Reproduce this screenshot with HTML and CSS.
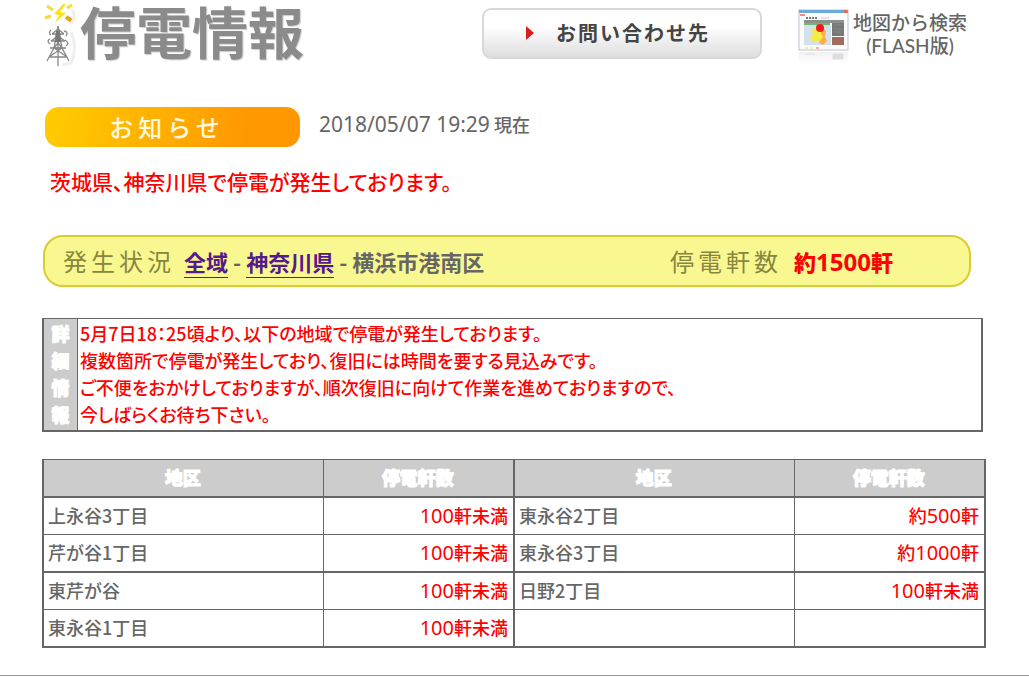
FILE: index.html
```html
<!DOCTYPE html>
<html lang="ja">
<head>
<meta charset="utf-8">
<meta name="viewport" content="width=device-width, initial-scale=1">
<title>停電情報</title>
<link rel="stylesheet" href="styles.css">
</head>
<body>
<header class="header">
  <div class="brand">
    <svg class="brand-icon" viewBox="0 0 34 64" aria-hidden="true">
      <path d="M19 2 10 12l5 1-4 8 11-10-6-1 6-8z" fill="#ffe21c"/>
      <path d="M3 4l6 4M1 16l6-2M28 3l-5 3" stroke="#f6d93c" stroke-width="3"/>
      <path d="M22 15l6 4" stroke="#e9a318" stroke-width="4"/>
      <path d="M28 8q5 6-1 14M27 30q7 15 0 31l-9 2" fill="none" stroke="#efefef" stroke-width="3"/>
      <g fill="none" stroke="#888" stroke-width="1.3">
        <path d="M14 24 10 46 3 59M14 24l4 22 7 13M14 26v38M10 46l13 9M18 46 5 55M5 55h18M9 46h10M11 37h6M11 37l7 9M17 37l-7 9"/>
        <path d="M8 32h12M7 39h14M6 46h16M8 32l6-5 6 5M7 39l7-5 7 5M7 28q-3 3 0 5M20 29q5 1 2 5M6 37q-4 2 0 5M21 38q5 3 1 6"/>
      </g>
      <path d="M12 29h4l1 11h-6z" fill="#777"/>
    </svg>
    <h1 class="brand-title">停電情報</h1>
  </div>
  <button class="contact" type="button">
    <svg class="contact-arrow" viewBox="0 0 8 14" aria-hidden="true"><path d="M0 0l8 7-8 7z" fill="#dc1a22"/></svg>
    <span>お問い合わせ先</span>
  </button>
  <a class="map-link" href="#map">
    <svg class="map-icon" viewBox="0 0 52 56" aria-hidden="true">
      <defs>
        <linearGradient id="fade" x1="0" y1="0" x2="0" y2="1"><stop offset="0" stop-color="#ddd"/><stop offset="1" stop-color="#fff"/></linearGradient>
      </defs>
      <rect x="1" y="1" width="49" height="40" fill="#fbfbfb" stroke="#b9c3dc"/>
      <path d="M1 1h49v3H1z" fill="#69a9dc"/>
      <path d="M46 1h3v3h-3z" fill="#e06a50"/>
      <path d="M2 6h5" stroke="#f08a80" stroke-width="2"/>
      <path d="M8 9h11" stroke="#777" stroke-width="2" stroke-dasharray="2 1"/>
      <path d="M23 9h8" stroke="#ccc"/>
      <path d="M6 11h40v3H6z" fill="#8a908a"/>
      <path d="M6 14h26v2H6z" fill="#69bb72"/>
      <path d="M6 16h27v20H6z" fill="#d4e1ea"/>
      <path d="M34 14h12v13H34z" fill="#777"/>
      <path d="M36 16h8M36 20h8M36 23h8" stroke="#888"/>
      <path d="M34 28h12v8H34z" fill="#a06b5b"/>
      <path d="M23 17l5 5-1 6 2 4-4 4-4-2 1-10z" fill="#ffac4c"/>
      <path d="M14 20l6-2 3 6 2 4-4 5-7-1-2-4 3-3z" fill="#f4ed45"/>
      <circle cx="22" cy="19" r="4" fill="#f21b18"/>
      <path d="M7 39h3M12 39h3" stroke="#f1df79"/><path d="M18 39h3" stroke="#f26b62"/>
      <path d="M1 43h49v12H1z" fill="url(#fade)" opacity=".4"/>
      <path d="M7 45h10M35 45h10v5H35z" fill="#ddd" stroke="#ddd"/>
    </svg>
    <span class="map-label">地図から検索<br>(FLASH版)</span>
  </a>
</header>

<main class="content">
  <section class="notice">
    <div class="notice-head">
      <h2 class="badge">お知らせ</h2>
      <time class="date" datetime="2018-05-07T19:29"><span class="num">2018/05/07 19:29</span> 現在</time>
    </div>
    <p class="alert">茨城県、神奈川県で停電が発生しております。</p>
  </section>

  <section class="status">
    <div class="status-area">
      <h2 class="status-label">発生状況</h2>
      <nav class="crumbs"><a href="#all">全域</a> - <a href="#kanagawa">神奈川県</a> - 横浜市港南区</nav>
    </div>
    <div class="status-count">
      <h2 class="status-label">停電軒数</h2>
      <strong class="total">約<span class="num">1500</span>軒</strong>
    </div>
  </section>

  <section class="detail">
    <h2 class="detail-label">詳<br>細<br>情<br>報</h2>
    <p class="detail-text">5月7日18：25頃より、以下の地域で停電が発生しております。<br>複数箇所で停電が発生しており、復旧には時間を要する見込みです。<br>ご不便をおかけしておりますが、順次復旧に向けて作業を進めておりますので、<br>今しばらくお待ち下さい。</p>
  </section>

  <table class="areas">
    <colgroup><col class="col-area"><col class="col-count"><col class="col-area"><col class="col-count"></colgroup>
    <thead>
      <tr><th scope="col">地区</th><th scope="col">停電軒数</th><th scope="col">地区</th><th scope="col">停電軒数</th></tr>
    </thead>
    <tbody>
      <tr><td>上永谷3丁目</td><td class="count"><span class="num">100</span>軒未満</td><td>東永谷2丁目</td><td class="count">約<span class="num">500</span>軒</td></tr>
      <tr><td>芹が谷1丁目</td><td class="count"><span class="num">100</span>軒未満</td><td>東永谷3丁目</td><td class="count">約<span class="num">1000</span>軒</td></tr>
      <tr><td>東芹が谷</td><td class="count"><span class="num">100</span>軒未満</td><td>日野2丁目</td><td class="count"><span class="num">100</span>軒未満</td></tr>
      <tr><td>東永谷1丁目</td><td class="count"><span class="num">100</span>軒未満</td><td></td><td class="count"></td></tr>
    </tbody>
  </table>
</main>
<hr class="rule">
</body>
</html>
```

FILE: styles.css
```css
* { box-sizing: border-box; }

body {
  margin: 0;
  background: #fff;
  color: #666;
  font: 500 18px/27px "Noto Sans CJK JP", sans-serif;
}

h1, h2, p { margin: 0; }

.num { font-family: "Noto Sans", sans-serif; font-size: 20px; font-weight: 400; }

.header {
  display: flex;
  align-items: flex-start;
  padding: 0 62px 0 44px;
}

.brand {
  display: flex;
  flex: 1;
  gap: 2px;
}

.brand-icon { width: 34px; height: 64px; margin-top: 2px; }

.brand-title {
  color: #8b8b8b;
  font-family: "Liberation Sans", "Noto Sans CJK JP", sans-serif;
  font-size: 56px;
  font-weight: 700;
  line-height: 70px;
  text-shadow: 1px 1px 1px #ccc;
}

.contact {
  display: flex;
  align-items: center;
  gap: 22px;
  width: 280px;
  height: 51px;
  margin: 8px 36px 0 0;
  padding: 0 0 2px 42px;
  border: 2px solid #d8d8d8;
  border-radius: 9px;
  background: linear-gradient(#fff 35%, #dedede);
  color: #444;
  font: 700 20px/28px "Noto Sans CJK JP", sans-serif;
  letter-spacing: 2px;
}

.contact-arrow { width: 8px; height: 14px; }

.map-link {
  display: flex;
  gap: 3px;
  color: #666;
  text-decoration: none;
}

.map-icon { width: 52px; height: 56px; margin-top: 9px; }

.map-label {
  margin-top: 11px;
  font-family: Lato, "Noto Sans CJK JP", sans-serif;
  font-size: 19px;
  line-height: 23px;
  text-align: center;
}

.content { padding: 37px 43px 0 42px; }

.notice-head { display: flex; gap: 19px; margin-left: 3px; }

.badge {
  width: 255px;
  padding-right: 11px;
  border-radius: 14px;
  background: linear-gradient(105deg, #ffcd00, #ff9700 80%);
  color: #fff8dc;
  font-size: 24px;
  font-weight: 500;
  line-height: 40px;
  letter-spacing: 5px;
  text-align: center;
}

.date { line-height: 34px; }
.date .num { font-size: 21px; }

.alert {
  margin: 19px 0 0 8px;
  color: #f00;
  font-size: 21px;
  line-height: 30px;
  font-feature-settings: "palt";
}

.status {
  display: flex;
  justify-content: space-between;
  margin: 39px 15px 0 1px;
  padding: 0 76px 0 18px;
  border: 2px solid #d8cc32;
  border-radius: 20px;
  background: #f9f890;
  font-size: 22px;
  font-weight: 700;
  line-height: 48px;
}

.status-area, .status-count { display: flex; gap: 9px; }
.status-count { gap: 12px; }

.status-label {
  color: #88863f;
  font-size: 24px;
  font-weight: 400;
  letter-spacing: 4px;
}

.crumbs { padding-top: 1px; line-height: 47px; }

.crumbs a {
  border-bottom: 1px solid #551a8b;
  color: #551a8b;
  line-height: 28px;
  text-decoration: none;
}

.total { padding-top: 1px; color: #f00; line-height: 47px; }
.total .num { font-size: 24px; font-weight: 700; line-height: 24px; }

.detail {
  display: flex;
  margin: 31px 3px 0 0;
  border: 2px solid #666;
  border-top-width: 1px;
}

.detail-label {
  width: 34px;
  padding: 1px 0 2px;
  border-right: 1px solid #666;
  background: #ccc;
  color: #fff;
  font-size: 18px;
  font-weight: 900;
  line-height: 27px;
  text-align: center;
  -webkit-text-stroke: 1px #fff;
}

.detail-text {
  padding: 1px 2px 2px;
  color: #f00;
  font-feature-settings: "palt";
}

.areas {
  width: 100%;
  margin-top: 27px;
  border: solid #666;
  border-width: 1px 0 0 2px;
  border-spacing: 0;
  table-layout: fixed;
  line-height: 34px;
}

.col-area { width: 29.7%; }
.col-count { width: 20.3%; }

.areas th, .areas td {
  height: 37px;
  padding: 0 5px 2px 4px;
  border: solid #666;
  border-width: 0 1px 1px 0;
  text-align: left;
}

.areas th {
  background: #ccc;
  color: #fff;
  font-weight: 900;
  text-align: center;
  -webkit-text-stroke: 1px #fff;
}

.areas th:nth-child(even), .areas td:nth-child(even) { border-right-width: 2px; }
.areas th, .areas tbody tr:nth-child(even) td { height: 38px; border-bottom-width: 2px; }
.areas .count { color: #f00; text-align: right; }
.areas .num { line-height: 20px; }

.rule {
  height: 1px;
  margin: 27px 0 0;
  border: 0;
  background: #999;
}
```
